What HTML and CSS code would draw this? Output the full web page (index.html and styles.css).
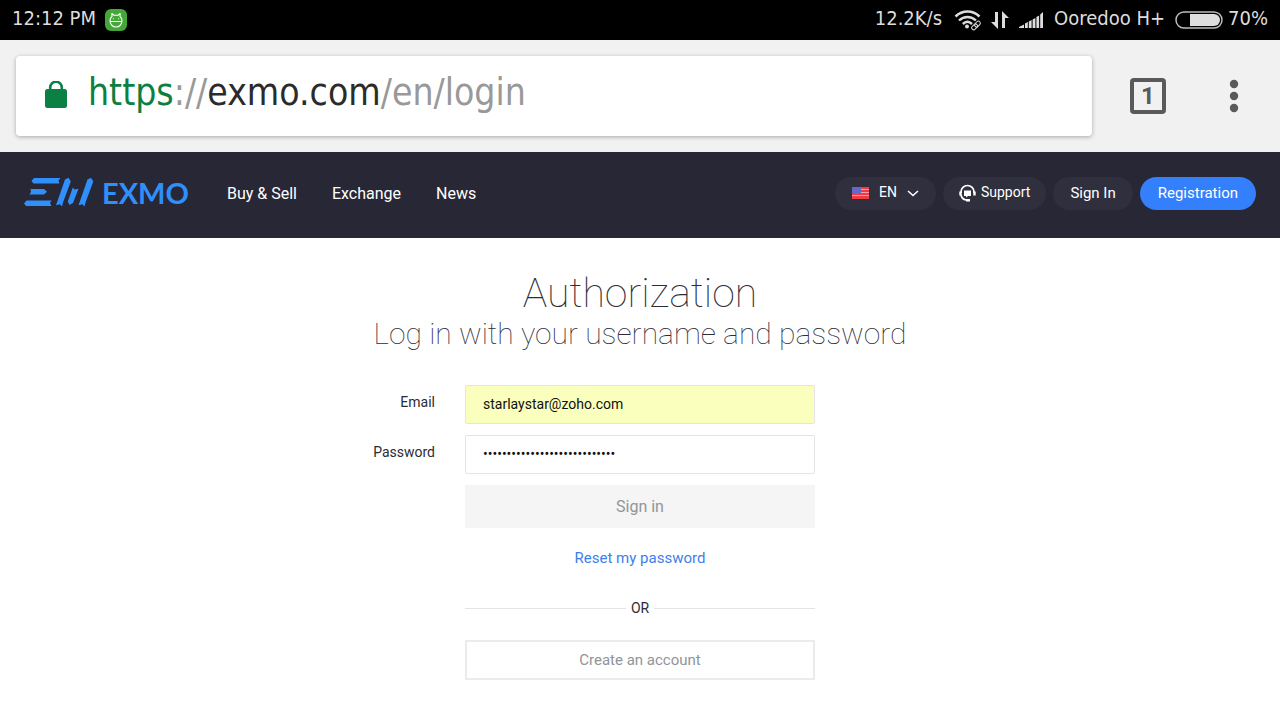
FILE: index.html
```
<!DOCTYPE html>
<html lang="en">
<head>
  <meta charset="UTF-8" />
  <meta name="viewport" content="width=device-width, initial-scale=1.0" />
  <title>EXMO - Authorization</title>
  <link rel="stylesheet" href="styles.css">
</head>
<body>
  <div class="status-bar">
    <span class="time">12:12 PM</span>
    <svg class="app-icon" width="24" height="24" viewBox="0 0 24 24" fill="none" stroke="#fff" stroke-width="1.1" stroke-linecap="round" stroke-linejoin="round">
      <rect x="1" y="1" width="22" height="22" rx="6" fill="#43a838" stroke="none" />
      <path d="M8 8.500 7.800 5.500 10 7.300h4l2.200-1.800L16 8.500c1.300 1 2 2.500 2 4 0 4-2.700 6.500-6 6.500s-6-2.500-6-6.500c0-1.500.7-3 2-4zM6 13.500h12M9.500 10.800h.1M14.500 10.800h.1" />
    </svg>
    <div class="status-right">
      <span>12.2K/s</span>
      <svg class="wifi" width="28" height="22" viewBox="0 0 28 22" fill="none" stroke="#ddd">
        <path d="M1.500 7.500C8.500.8 18.500.8 25.500 7.500" stroke-width="2.600" />
        <path d="M5 11.500c5-4.700 12-4.700 17 0M8.800 15c2.800-2.600 6.400-2.600 9.200 0" stroke-width="2.400" />
        <circle cx="13" cy="17.500" r="2" fill="#ddd" stroke="none" />
        <g transform="rotate(-45 22 16.500)">
          <path d="M16 13.500h12v6H16z" fill="#000" stroke="none" />
          <rect x="16.800" y="14.500" width="6.500" height="4" rx="2" />
          <rect x="20.800" y="14.500" width="6.500" height="4" rx="2" />
        </g>
      </svg>
      <svg class="traffic" width="20" height="20" viewBox="0 0 20 20" fill="#ddd">
        <path d="M5 2h3v17L1 12h4zM12 18V1l7 7h-4v10z" />
      </svg>
      <svg class="signal" width="26" height="18" viewBox="0 0 26 18" fill="#ddd">
        <path d="M1 17v-1l5-2.500V17zM7 17v-4.500l2.800-1.500v6zM10.800 17v-6.500l2.800-1.500v8zM14.600 17V8.500L17.400 7v10zM18.400 17V6l2.700-1.600V17zM22.200 17V3.500L25 1v16z" />
      </svg>
      <span class="carrier">Ooredoo H+</span>
      <svg class="battery" width="48" height="18" viewBox="0 0 48 18">
        <rect x="1" y="1" width="46" height="16" rx="8" fill="none" stroke="#bbb" stroke-width="1.500" />
        <path d="M15 3h24a6 6 0 0 1 0 12H15z" fill="#ddd" />
      </svg>
      <span>70%</span>
    </div>
  </div>

  <div class="browser-bar">
    <div class="url-box">
      <svg width="24" height="30" viewBox="0 0 24 30">
        <rect x="1" y="8" width="22" height="19" rx="2.500" fill="#0b8043" />
        <path d="M6.200 10V6.500a5.800 5.800 0 0 1 11.600 0V10" fill="none" stroke="#0b8043" stroke-width="2.600" />
      </svg>
      <div class="url"><span class="scheme">https</span>://<span class="host">exmo.com</span>/en/login</div>
    </div>
    <button class="tabs" type="button" aria-label="Tabs">1</button>
    <button class="menu" type="button" aria-label="Menu">
      <svg width="10" height="34" viewBox="0 0 10 34" fill="#5a5a5a">
        <circle cx="5" cy="5" r="4.200" /><circle cx="5" cy="17" r="4.200" /><circle cx="5" cy="29" r="4.200" />
      </svg>
    </button>
  </div>

  <header class="site-header">
    <a class="logo" href="#">
      <svg width="70" height="32" viewBox="0 0 70 32" fill="#2f8ffb">
        <path d="M10 1h26.500L34.500 3.500l1 3H9.500L7.500 4zM6.500 12H20l3 2.800-3 2.700H5.500l1.500-2.700zM2.500 23.500h25L26 26l1.500 3H2l-2-2.500z" />
        <path d="M41 2.500 44.500.8l2.300 3.700L39 25.500l-1 4-2.200-2.200-3.800.9 1.500-4.200zM48.800 10.500l1.700 2 4-.8L49 26l-3.500 2-1.700-3.500zM63.500 2.500 67 .8l2.300 3.700L61.500 25.500l-1 4-2.200-2.200-3.800.9 1.500-4.200z" />
      </svg>
      <span>EXMO</span>
    </a>
    <nav class="main-nav">
      <a href="#">Buy &amp; Sell</a>
      <a href="#">Exchange</a>
      <a href="#">News</a>
    </nav>
    <div class="actions">
      <button class="pill lang" type="button">
        <svg width="17" height="12" viewBox="0 0 17 12">
          <path fill="#ef3b45" d="M0 0h17v12H0z" />
          <path stroke="#f9a0a4" d="M0 2.500h17M0 5.500h17M0 8.500h17" />
          <path fill="#6667c9" d="M0 0h9v6H0z" />
        </svg>
        <span>EN</span>
        <svg width="12" height="8" viewBox="0 0 12 8" fill="none" stroke="#fff" stroke-width="1.600"><path d="M1 2l5 4.500L11 2" /></svg>
      </button>
      <a class="pill support" href="#">
        <svg width="17" height="18" viewBox="0 0 17 18" fill="none" stroke="#fff">
          <path d="M2 9V8a6.500 6.500 0 0 1 13 0v1M2 11c.5 2.800 2.500 4.500 5 5" stroke-width="1.700" />
          <path d="M1.500 7.500v4M15.500 7.500v4M7 16.300h4" stroke-width="2.400" />
          <path d="M5 6.500h7v5.500h-3l-2 1.500V12H5z" fill="#fff" stroke="none" />
        </svg>
        <span>Support</span>
      </a>
      <a class="pill" href="#">Sign In</a>
      <a class="pill register" href="#">Registration</a>
    </div>
  </header>

  <main>
    <h1>Authorization</h1>
    <h2>Log in with your username and password</h2>

    <form class="login-form">
      <label for="email">Email</label>
      <input type="email" id="email" class="autofilled" value="starlaystar@zoho.com" />
      <label for="password">Password</label>
      <input type="password" id="password" value="1234567890123456789012345678" />
      <button class="sign-in" type="submit" disabled>Sign in</button>
      <a class="reset" href="#">Reset my password</a>
      <div class="divider">OR</div>
      <button class="create" type="button">Create an account</button>
    </form>
  </main>
</body>
</html>
```
FILE: styles.css
```
* {
  margin: 0;
  padding: 0;
  box-sizing: border-box;
}

body {
  font-family: Roboto, sans-serif;
  background: #fff;
  color: #2c2c36;
}

a {
  text-decoration: none;
}

button {
  font-family: inherit;
  border: none;
  cursor: pointer;
}

/* phone status bar */
.status-bar {
  display: flex;
  align-items: center;
  height: 40px;
  padding: 0 12px;
  background: #000;
  color: #ddd;
  font-family: "DejaVu Sans Condensed", "DejaVu Sans", sans-serif;
  font-size: 20px;
}

.status-bar span {
  padding-bottom: 4px;
}

.app-icon {
  margin-left: 8px;
}

.status-right {
  display: flex;
  align-items: center;
  margin-left: auto;
}

.wifi {
  margin-left: 12px;
}

.traffic,
.signal {
  margin-left: 8px;
}

.carrier {
  margin: 0 10px;
}

.battery {
  margin-right: 5px;
}

/* browser bar */
.browser-bar {
  display: flex;
  align-items: center;
  height: 112px;
  padding: 0 16px;
  background: #f1f1f1;
}

.url-box {
  flex: 1;
  display: flex;
  align-items: center;
  gap: 20px;
  height: 80px;
  padding: 0 28px;
  background: #fff;
  border-radius: 4px;
  box-shadow: 0 1px 4px rgba(0, 0, 0, 0.3);
}

.url {
  padding-bottom: 8px;
  font-family: "DejaVu Sans Condensed", "DejaVu Sans", sans-serif;
  font-size: 37px;
  color: #999;
}

.scheme {
  color: #0b8043;
}

.host {
  color: #2b2b2b;
}

.tabs {
  width: 36px;
  height: 36px;
  margin-left: 38px;
  border: 4px solid #5a5a5a;
  border-radius: 4px;
  background: none;
  color: #5a5a5a;
  font-size: 24px;
  font-weight: 700;
  line-height: 28px;
}

.menu {
  display: flex;
  margin: 0 25px 0 63px;
  background: none;
}

/* site header */
.site-header {
  display: flex;
  align-items: center;
  height: 86px;
  padding: 0 24px 4px;
  background: #282736;
}

.logo {
  display: flex;
  align-items: center;
  gap: 8px;
  color: #2f8ffb;
  font-family: Lato, sans-serif;
  font-size: 29px;
  font-weight: 700;
}

.logo span {
  padding-bottom: 2px;
}

.main-nav {
  display: flex;
  gap: 35px;
  margin-left: 38px;
}

.main-nav a {
  color: #fff;
  font-size: 16px;
}

.actions {
  display: flex;
  gap: 7px;
  margin-left: auto;
}

.pill {
  display: flex;
  align-items: center;
  height: 33px;
  padding: 0 17px;
  border-radius: 17px;
  background: #302f3e;
  color: #fff;
  font-size: 15px;
}

.lang,
.support {
  font-size: 14px;
}

.lang span,
.support span {
  padding-bottom: 2px;
}

.lang {
  gap: 10px;
}

.support {
  gap: 5px;
  padding: 0 16px;
}

.register {
  padding: 0 18px;
  background: #347ffb;
}

/* login */
main {
  padding: 30px 16px;
}

h1,
h2 {
  text-align: center;
  font-weight: 100;
}

h1 {
  font-size: 41px;
  line-height: 50px;
}

h2 {
  font-size: 30px;
  line-height: 32px;
}

.login-form {
  display: grid;
  grid-template-columns: 1fr 350px 1fr;
  margin-top: 35px;
}

.login-form label {
  grid-column: 1;
  padding-right: 30px;
  text-align: right;
  font-size: 14px;
  line-height: 34px;
}

.login-form > :not(label) {
  grid-column: 2;
}

.login-form input {
  height: 39px;
  margin-bottom: 11px;
  padding: 0 17px 2px;
  border: 1px solid #e4e4e4;
  border-radius: 2px;
  background: #fff;
  color: #111;
  font-family: inherit;
  font-size: 14px;
}

.login-form .autofilled {
  background: #faffbd;
}

.sign-in {
  height: 43px;
  background: #f5f5f5;
  color: #919499;
  font-size: 16px;
}

.reset {
  margin-top: 20px;
  text-align: center;
  color: #3c80ec;
  font-size: 15px;
  line-height: 20px;
}

.divider {
  display: flex;
  align-items: center;
  gap: 5px;
  margin: 30px 0 22px;
  font-size: 14px;
  line-height: 20px;
}

.divider::before,
.divider::after {
  content: "";
  flex: 1;
  height: 1px;
  background: #e4e4e4;
}

.create {
  height: 40px;
  border: 2px solid #ebebeb;
  background: #fff;
  color: #919499;
  font-size: 15px;
}
```
